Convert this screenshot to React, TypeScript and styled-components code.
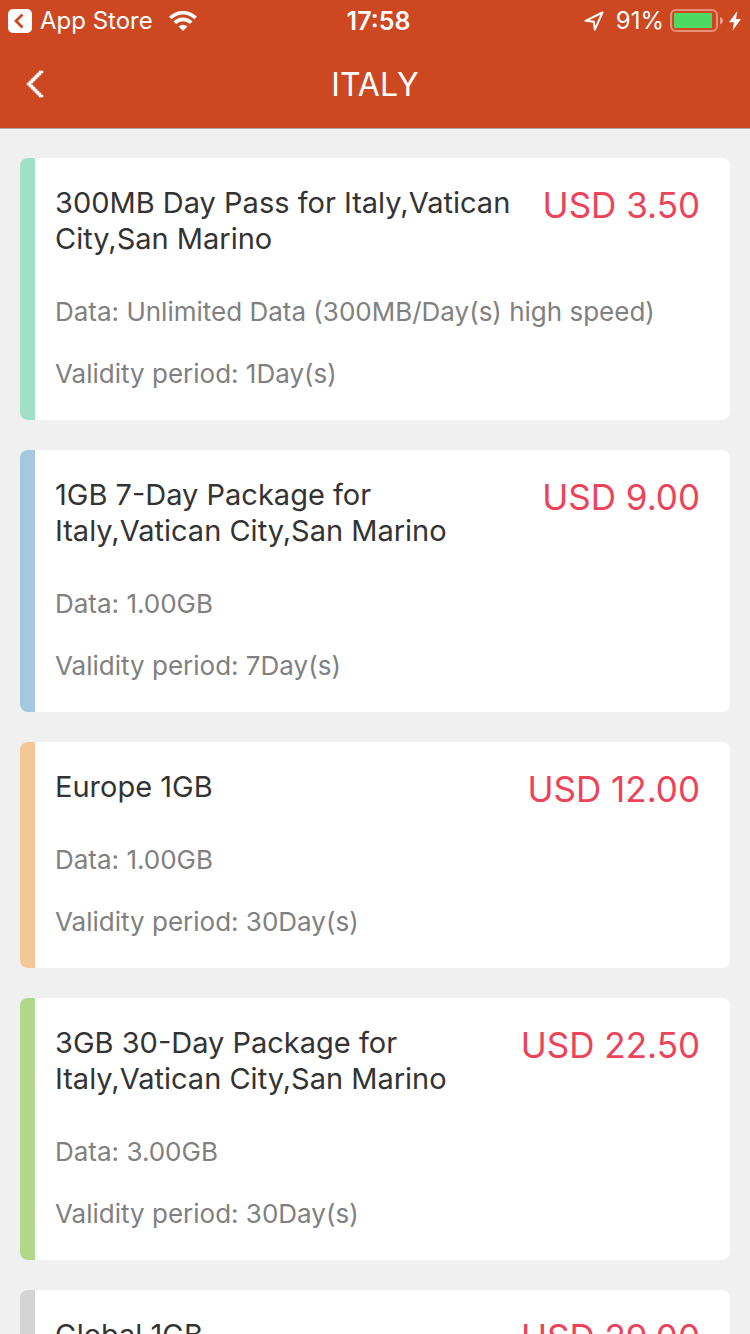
import React from 'react';
import styled, { createGlobalStyle } from 'styled-components';

const GlobalStyle = createGlobalStyle`
  * { box-sizing: border-box; }
  body {
    margin: 0;
    background: #f0f0f0;
    font-family: Inter, "Liberation Sans", sans-serif;
  }
`;

const Screen = styled.div`
  height: 100vh;
  display: flex;
  flex-direction: column;
  overflow: hidden;
`;

const Header = styled.header`
  flex: none;
  background: #cd4721;
  color: #fff;
  border-bottom: 1px solid #aba9a8;
`;

const StatusBar = styled.div`
  display: grid;
  grid-template-columns: 1fr auto 1fr;
  align-items: center;
  height: 42px;
  padding: 0 9px 0 8px;
  font-size: 24px;
  line-height: 42px;
`;

const StatusGroup = styled.div<{ $end?: boolean }>`
  display: flex;
  align-items: center;
  gap: ${(p) => (p.$end ? '12px' : '16px')};
  justify-content: ${(p) => (p.$end ? 'flex-end' : 'flex-start')};
`;

const BackToApp = styled.button`
  display: flex;
  align-items: center;
  gap: 8px;
  padding: 0;
  border: 0;
  background: none;
  color: inherit;
  font: inherit;
`;

const Clock = styled.time`
  padding-left: 8px;
  font-size: 25px;
  font-weight: 600;
`;

const BatteryLevel = styled.span`
  display: flex;
  align-items: center;
  gap: 6px;
`;

const NavBar = styled.nav`
  display: grid;
  grid-template-columns: 64px 1fr 64px;
  align-items: center;
  height: 86px;
`;

const BackButton = styled.button`
  display: flex;
  align-items: center;
  align-self: start;
  height: 84px;
  padding: 0 0 0 26px;
  border: 0;
  background: none;
  color: inherit;
`;

const Heading = styled.h1`
  margin: 0;
  font-size: 32px;
  font-weight: 400;
  line-height: 40px;
  text-align: center;
`;

const PackageList = styled.main`
  flex: 1;
  min-height: 0;
  overflow: hidden;
  display: flex;
  flex-direction: column;
  gap: 30px;
  padding: 29px 20px 0;
`;

const Card = styled.article<{ $accent: string }>`
  flex: none;
  padding: 27px 30px 30px 20px;
  border-left: 15px solid ${(p) => p.$accent};
  border-radius: 8px;
  background: #fff;
`;

const CardHead = styled.div`
  display: flex;
  align-items: flex-start;
  justify-content: space-between;
  gap: 32px;
`;

const Title = styled.h2`
  margin: 0 0 39px;
  color: #333;
  font-size: 29px;
  font-weight: 400;
  line-height: 36px;
`;

const Price = styled.span`
  flex: none;
  color: #ec4359;
  font-size: 35px;
  line-height: 40px;
  font-weight: 400;
  white-space: nowrap;
`;

const Detail = styled.p`
  margin: 0;
  color: #808080;
  font-size: 26px;
  line-height: 32px;

  & + & {
    margin-top: 30px;
  }
`;

const AppStoreIcon = () => (
  <svg width="24" height="24" viewBox="0 0 24 24" aria-hidden="true">
    <rect width="24" height="24" rx="5" fill="#fff" />
    <path d="M14.500 5.500 8 12l6.500 6.500" fill="none" stroke="#cd4721" strokeWidth="2.8" />
  </svg>
);

const WifiIcon = () => (
  <svg width="28" height="20" viewBox="0 0 28 20" role="img" aria-label="Wi-Fi">
    <g fill="none" stroke="#fff" strokeWidth="3.6">
      <path d="M1.300 7a18 18 0 0 1 25.400 0" />
      <path d="M5.800 11.800a11.600 11.600 0 0 1 16.400 0" />
    </g>
    <path d="M9.600 15.500a6.200 6.200 0 0 1 8.800 0L14 20z" fill="#fff" />
  </svg>
);

const LocationIcon = () => (
  <svg width="20" height="20" viewBox="0 0 20 20" role="img" aria-label="Location">
    <path d="M18.500 1.500 1.500 9.800l8.300.9 1 8z" fill="none" stroke="#fff" strokeWidth="2" strokeLinejoin="round" />
  </svg>
);

const BatteryIcon = () => (
  <svg width="53" height="24" viewBox="0 0 53 24" role="img" aria-label="Battery">
    <rect x="1" y="1" width="46" height="21" rx="5" fill="none" stroke="#e6917a" strokeWidth="2" />
    <rect x="4" y="4" width="38" height="15" rx="1" fill="#4cd964" />
    <path d="M50 8c4 1.500 4 6 0 7.500z" fill="#e6a08c" />
  </svg>
);

const BoltIcon = () => (
  <svg width="12" height="20" viewBox="0 0 12 20" role="img" aria-label="Charging">
    <path d="M8.300 0 0 11.200h5L3.600 19.800 12 8H7z" fill="#fff" />
  </svg>
);

const ChevronIcon = () => (
  <svg width="18" height="28" viewBox="0 0 18 28" aria-hidden="true">
    <path
      d="M13 1h4v2h-2v2h-2v2h-2v2H9v2H7v2H5v2h2v2h2v2h2v2h2v2h2v2h2v2h-4v-2h-2v-2H9v-2H7v-2H5v-2H3v-2H1v-2h2v-2h2V9h2V7h2V5h2V3h2z"
      fill="#fff"
      stroke="#fff"
      strokeOpacity="0.6"
      strokeWidth="1"
    />
  </svg>
);

const packages = [
  { title: '300MB Day Pass for Italy,Vatican City,San Marino', price: '3.50', data: 'Unlimited Data (300MB/Day(s) high speed)', days: 1, accent: '#a0e0c8' },
  { title: '1GB 7-Day Package for Italy,Vatican City,San Marino', price: '9.00', data: '1.00GB', days: 7, accent: '#a5c8e1' },
  { title: 'Europe 1GB', price: '12.00', data: '1.00GB', days: 30, accent: '#f3c896' },
  { title: '3GB 30-Day Package for Italy,Vatican City,San Marino', price: '22.50', data: '3.00GB', days: 30, accent: '#b1d78a' },
  { title: 'Global 1GB', price: '29.00', data: '1.00GB', days: 30, accent: '#d4d4d4' },
];

export default function App() {
  return (
    <Screen>
      <GlobalStyle />
      <Header>
        <StatusBar>
          <StatusGroup>
            <BackToApp type="button">
              <AppStoreIcon />
              App Store
            </BackToApp>
            <WifiIcon />
          </StatusGroup>
          <Clock>17:58</Clock>
          <StatusGroup $end>
            <LocationIcon />
            <BatteryLevel>
              91%
              <BatteryIcon />
              <BoltIcon />
            </BatteryLevel>
          </StatusGroup>
        </StatusBar>
        <NavBar>
          <BackButton type="button" aria-label="Back">
            <ChevronIcon />
          </BackButton>
          <Heading>ITALY</Heading>
        </NavBar>
      </Header>
      <PackageList>
        {packages.map((item) => (
          <Card key={item.title} $accent={item.accent}>
            <CardHead>
              <Title>{item.title}</Title>
              <Price>USD {item.price}</Price>
            </CardHead>
            <Detail>Data: {item.data}</Detail>
            <Detail>Validity period: {item.days}Day(s)</Detail>
          </Card>
        ))}
      </PackageList>
    </Screen>
  );
}
